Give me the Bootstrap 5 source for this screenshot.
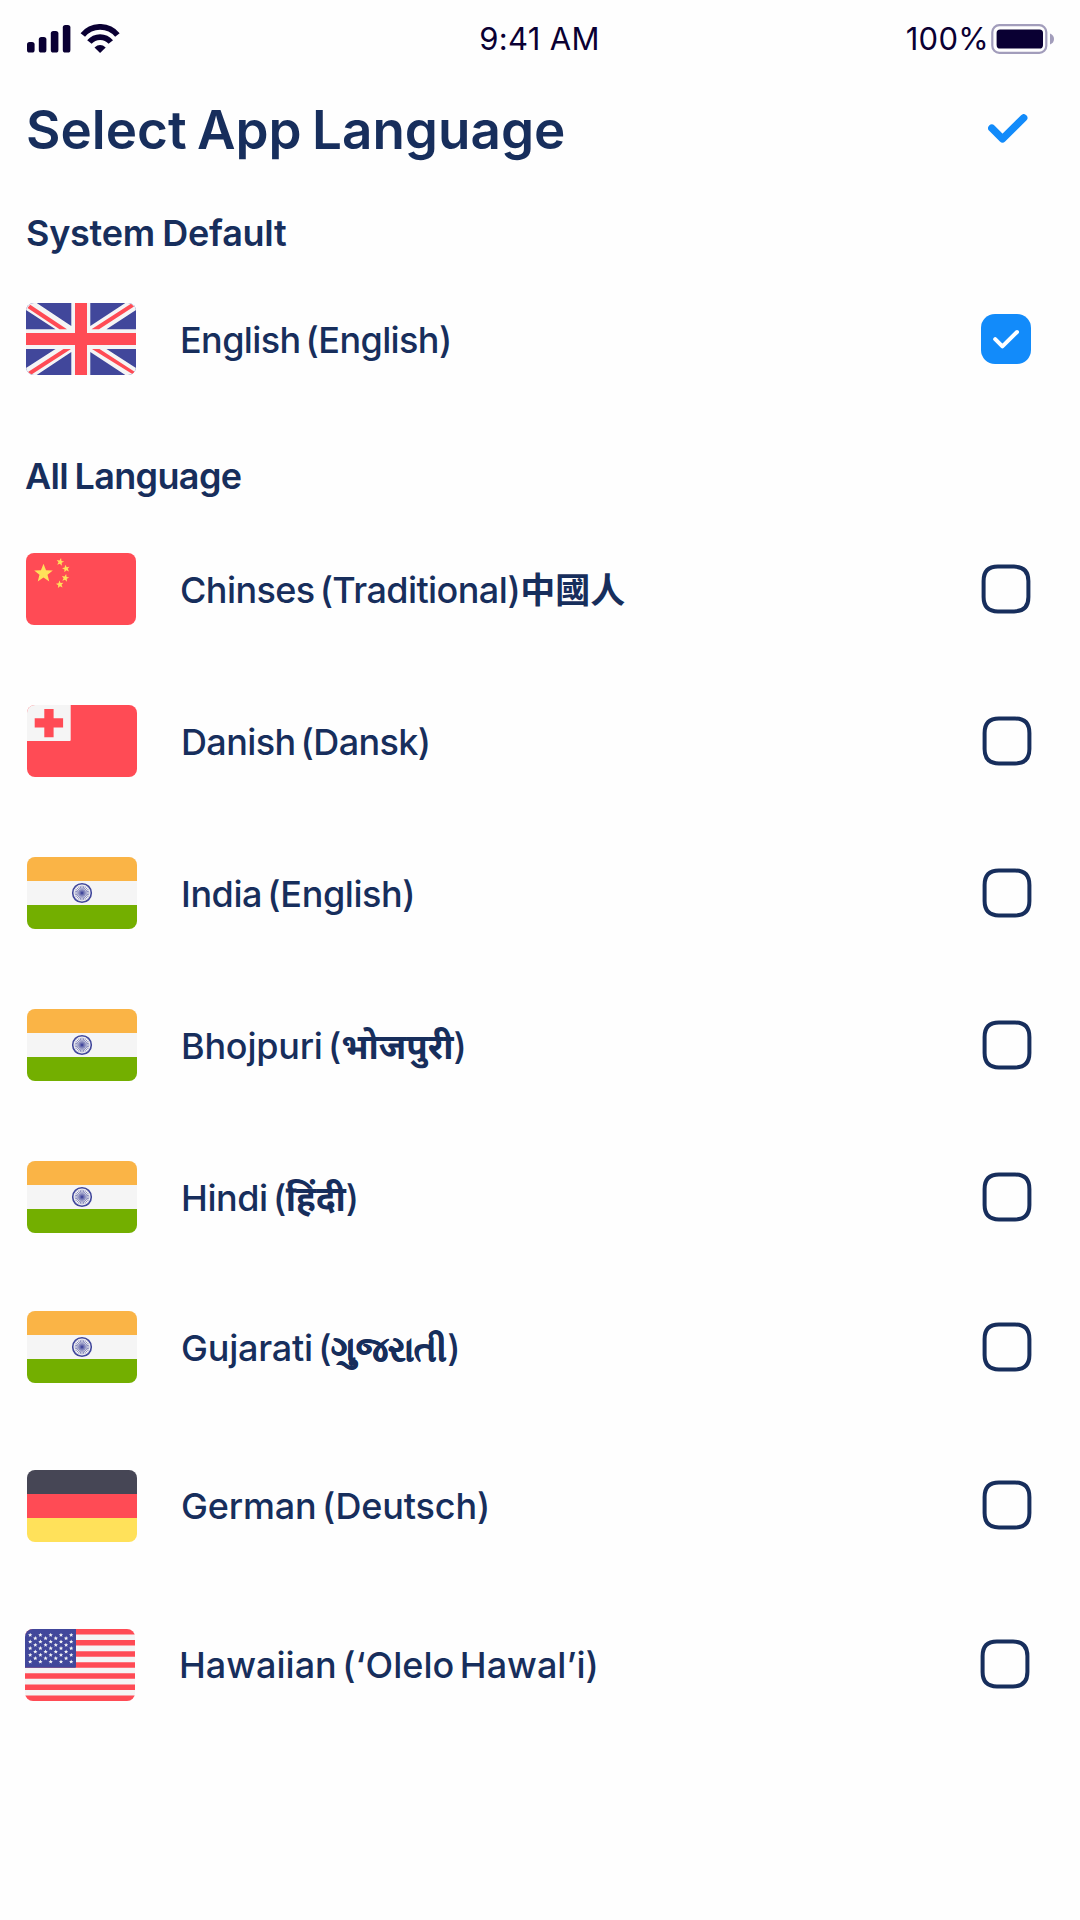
<!DOCTYPE html>
<html lang="en">
<head>
<meta charset="utf-8">
<meta name="viewport" content="width=device-width, initial-scale=1">
<title>Select App Language</title>
<link href="https://cdn.jsdelivr.net/npm/bootstrap@5.3.0/dist/css/bootstrap.min.css" rel="stylesheet">
<style>
  :root { --navy: #172e5c; --ink: #0a0033; }
  body { background: #fefefe; color: var(--navy); font-family: Inter, "Noto Sans", "Noto Sans CJK TC", sans-serif; }
  .screen { width: 1080px; min-height: 1920px; }
  svg { display: block; flex: none; }

  .status { height: 78px; padding: 0 25px 0 27px; color: var(--ink); font-size: 31px; line-height: 78px; letter-spacing: .3px; }
  .status > div { flex: 1 1 0; }
  .clock { padding-right: 3px; }
  .battery { margin-left: 2px; }

  .title-bar { height: 64px; margin-top: 20px; padding: 0 52px 0 26px; }
  .page-title { font-size: 53px; font-weight: 600; line-height: 64px; word-spacing: -3px; }
  .apply { margin-bottom: 3px; }
  .section-title { font-size: 36px; font-weight: 600; line-height: 44px; margin: 0; padding-left: 26px; }
  .sys { margin-top: 49px; letter-spacing: -.25px; word-spacing: -1.5px; }
  .all { margin-top: 79px; letter-spacing: -.65px; word-spacing: -2px; padding-left: 25px; }
  .default-lang { margin-top: 48px; }
  .lang-list { margin-top: 55px; }

  .lang { height: 72px; padding: 0 48px 0 27px; margin-bottom: 80px; }
  .lang-name { font-size: 36px; font-weight: 500; line-height: 44px; padding-top: 2px; margin-left: 44px; word-spacing: -4px; white-space: nowrap; }
  .native { font-size: 35px; font-weight: 700; line-height: 0; letter-spacing: 0; }
  .native-han { font-family: "Noto Sans CJK TC", sans-serif; }
  .native-deva { font-family: "Noto Sans", sans-serif; }
  .native-guj { font-size: 34px; -webkit-text-stroke: .7px currentColor; }
  .edge { padding-left: 26px; padding-right: 49px; }
  .edge-2 { padding-left: 25px; padding-right: 50px; }
  .gap-78 { margin-bottom: 78px; } .gap-87 { margin-bottom: 87px; }
  .raised .lang-name { padding-top: 0; }
  .raised .ms-auto { margin-bottom: 2px; }
  .ls-60 { letter-spacing: -.62px; } .ls-55 { letter-spacing: -.58px; } .ls-40 { letter-spacing: -.42px; }
  .ls-20 { letter-spacing: -.22px; } .ls-13 { letter-spacing: -.15px; }
  .flag { border-radius: 8px; }
</style>
</head>
<body>
<svg width="0" height="0" class="position-absolute" aria-hidden="true">
  <defs>
    <path id="star" d="M0-1 .26-.34.95-.31.41.13.59.81 0 .42-.59.81-.41.13-.95-.31-.26-.34Z"/>
    <g id="stars5"><use href="#star" transform="translate(5.2 0) scale(2.3)"/><use href="#star" transform="translate(15.4 0) scale(2.3)"/><use href="#star" transform="translate(25.7 0) scale(2.3)"/><use href="#star" transform="translate(36 0) scale(2.3)"/><use href="#star" transform="translate(46.2 0) scale(2.3)"/></g>
    <g id="stars4"><use href="#star" transform="translate(10.3 0) scale(2.3)"/><use href="#star" transform="translate(20.6 0) scale(2.3)"/><use href="#star" transform="translate(30.8 0) scale(2.3)"/><use href="#star" transform="translate(41.1 0) scale(2.3)"/></g>
    <symbol id="india" viewBox="0 0 110 72">
      <path fill="#f5f5f5" d="M0 0h110v72H0z"/><path fill="#fab446" d="M0 0h110v24H0z"/><path fill="#73af00" d="M0 48h110v24H0z"/>
      <g fill="none" stroke="#41479b"><circle cx="55" cy="36" r="9.3" stroke-width="1.6"/>
      <path stroke-width=".6" d="M47.500 36h15M47.760 34.060l14.480 3.880M48.500 32.250l13 7.500M49.700 30.700l10.600 10.600M51.250 29.500l7.500 13M53.060 28.760l3.880 14.480M55 28.500v15M56.940 28.760l-3.880 14.480M58.750 29.500l-7.500 13M60.300 30.700 49.700 41.300M61.500 32.250l-13 7.500M62.240 34.060l-14.480 3.880"/></g>
    </symbol>
    <symbol id="empty-box" viewBox="0 0 50 50"><path fill="none" stroke="#172e5c" stroke-width="4" d="M17 2.600h16Q47.400 2.600 47.400 17v16Q47.400 47.400 33 47.400H17Q2.600 47.400 2.600 33V17Q2.600 2.600 17 2.600Z"/></symbol>
  </defs>
</svg>

<main class="screen d-flex flex-column">
  <header class="status d-flex align-items-center">
    <div class="d-flex align-items-center">
      <svg width="93" height="30" viewBox="0 0 93 30" fill="#0a0033">
        <rect x="0" y="18" width="7.6" height="10.5" rx="2.6"/><rect x="11.8" y="13" width="7.6" height="15.5" rx="2.6"/><rect x="23.8" y="7" width="7.6" height="21.5" rx="2.6"/><rect x="35.8" y="1" width="7.6" height="27.5" rx="2.6"/>
        <g fill="none" stroke="#0a0033" stroke-width="5.8"><path d="M55.800 11a22.500 22.500 0 0 1 34.600 0"/><path d="M62.400 18a14 14 0 0 1 21.400 0"/></g>
        <path d="M67.500 23.400q5.600-4.800 11.200 0L73.100 29Z"/>
      </svg>
    </div>
    <div class="clock text-center">9:41 AM</div>
    <div class="d-flex align-items-center justify-content-end">
      <span>100%</span>
      <svg class="battery" width="64" height="30" viewBox="1 0 64 30"><rect x="2.300" y="1.200" width="54" height="27.600" rx="7" fill="none" stroke="#a29dbb" stroke-width="2.200"/><rect x="6.600" y="5.500" width="46.400" height="19" rx="3.600" fill="#0a0033"/><path d="M60 9.500q4 1.500 4 5.500t-4 5.500Z" fill="#a29dbb"/></svg>
    </div>
  </header>

  <div class="title-bar d-flex align-items-center justify-content-between">
    <h1 class="page-title m-0">Select App Language</h1>
    <svg class="apply" width="40" height="30" viewBox="0 0 40 30"><path d="M3.800 14.200 14.500 24.900 35.700 3.900" fill="none" stroke="#128bfa" stroke-width="7.400" stroke-linecap="round" stroke-linejoin="round"/></svg>
  </div>

  <h2 class="section-title sys">System Default</h2>
  <div class="lang edge default-lang d-flex align-items-center mb-0">
    <svg class="flag" width="110" height="72" viewBox="0 0 110 72">
      <path fill="#41479b" d="M0 0h110v72H0z"/>
      <path fill="#f5f5f5" d="M0 0h10.700L45.300 23V0h19v23L99.300 0H110v7L80.500 26.300H110V46H80.500L110 65v7H99.300L64.300 49v23h-19V49L10.700 72H0v-7l29.500-19H0V26.300h29.500L0 7Z"/>
      <path fill="#ff4b55" d="M49 0h12v30h49v12H61v30H49V42H0V30h49ZM4.200 1.800 41 26.200h-7.500L1.500 5ZM105 .8l3 2.700L73 26.200h-7.500ZM45 46h-7.500L2 69l3.500 2.600ZM66 46h7.500L109 69l-2.300 2.200Z"/>
    </svg>
    <span class="lang-name ls-60">English (English)</span>
    <svg class="ms-auto" width="50" height="50" viewBox="0 0 50 50"><rect width="50" height="50" rx="14" fill="#128bfa"/><path d="M14.200 25.200 21.400 32.400 36 18" fill="none" stroke="#fff" stroke-width="4" stroke-linecap="round" stroke-linejoin="round"/></svg>
  </div>

  <h2 class="section-title all">All Language</h2>
  <section class="lang-list d-flex flex-column">
    <div class="lang edge d-flex align-items-center">
      <svg class="flag" width="110" height="72" viewBox="0 0 110 72"><path fill="#ff4b55" d="M0 0h110v72H0z"/>
        <g fill="#ffe15a"><use href="#star" transform="translate(17.500 20.500) scale(9.800)"/><use href="#star" transform="translate(34.200 9) rotate(12) scale(4)"/><use href="#star" transform="translate(40 15.700) rotate(-12) scale(4)"/><use href="#star" transform="translate(39.300 25) rotate(12) scale(4)"/><use href="#star" transform="translate(33.800 31.500) rotate(-8) scale(4)"/></g></svg>
      <span class="lang-name ls-55">Chinses (Traditional)<span class="native native-han">中國人</span></span>
      <svg class="ms-auto" width="50" height="50"><use href="#empty-box"/></svg>
    </div>
    <div class="lang d-flex align-items-center">
      <svg class="flag" width="110" height="72" viewBox="0 0 110 72"><path fill="#ff4b55" d="M0 0h110v72H0z"/><path fill="#f5f5f5" d="M0 0h43.700v35q0 1-1 1H0Z"/><path fill="#ff4b55" d="M17.300 4h9.300v9.200h9.500v9.400h-9.500v9.600h-9.300v-9.600H7.700v-9.400h9.600Z"/></svg>
      <span class="lang-name ls-60">Danish (Dansk)</span>
      <svg class="ms-auto" width="50" height="50"><use href="#empty-box"/></svg>
    </div>
    <div class="lang d-flex align-items-center">
      <svg class="flag" width="110" height="72"><use href="#india"/></svg>
      <span class="lang-name ls-40">India (English)</span>
      <svg class="ms-auto" width="50" height="50"><use href="#empty-box"/></svg>
    </div>
    <div class="lang d-flex align-items-center">
      <svg class="flag" width="110" height="72"><use href="#india"/></svg>
      <span class="lang-name ls-20">Bhojpuri (<span class="native native-deva">भोजपुरी</span>)</span>
      <svg class="ms-auto" width="50" height="50"><use href="#empty-box"/></svg>
    </div>
    <div class="lang gap-78 d-flex align-items-center">
      <svg class="flag" width="110" height="72"><use href="#india"/></svg>
      <span class="lang-name ls-40">Hindi (<span class="native native-deva">हिंदी</span>)</span>
      <svg class="ms-auto" width="50" height="50"><use href="#empty-box"/></svg>
    </div>
    <div class="lang gap-87 d-flex align-items-center">
      <svg class="flag" width="110" height="72"><use href="#india"/></svg>
      <span class="lang-name ls-20">Gujarati (<span class="native native-guj">ગુજરાતી</span>)</span>
      <svg class="ms-auto" width="50" height="50"><use href="#empty-box"/></svg>
    </div>
    <div class="lang gap-87 raised d-flex align-items-center">
      <svg class="flag" width="110" height="72" viewBox="0 0 110 72"><path fill="#464655" d="M0 0h110v24H0z"/><path fill="#ff4b55" d="M0 24h110v24H0z"/><path fill="#ffe15a" d="M0 48h110v24H0z"/></svg>
      <span class="lang-name ls-13">German (Deutsch)</span>
      <svg class="ms-auto" width="50" height="50"><use href="#empty-box"/></svg>
    </div>
    <div class="lang edge-2 raised d-flex align-items-center">
      <svg class="flag" width="110" height="72" viewBox="0 0 110 72">
        <path fill="#f5f5f5" d="M0 0h110v72H0z"/>
        <path stroke="#ff4b55" stroke-width="5.540" d="M0 2.770h110M0 13.850h110M0 24.930h110M0 36h110M0 47.080h110M0 58.160h110M0 69.240h110"/>
        <path fill="#41479b" d="M0 0h51v37.800q0 .9-.9.900H0Z"/>
        <g fill="#f5f5f5"><use href="#stars5" y="6"/><use href="#stars4" y="9.400"/><use href="#stars5" y="12.700"/><use href="#stars4" y="16"/><use href="#stars5" y="19.400"/><use href="#stars4" y="22.700"/><use href="#stars5" y="26"/><use href="#stars4" y="29.400"/><use href="#stars5" y="32.700"/></g>
      </svg>
      <span class="lang-name">Hawaiian (‘Olelo Hawal’i)</span>
      <svg class="ms-auto" width="50" height="50"><use href="#empty-box"/></svg>
    </div>
  </section>
</main>
<script src="https://cdn.jsdelivr.net/npm/bootstrap@5.3.0/dist/js/bootstrap.bundle.min.js"></script>
</body>
</html>
